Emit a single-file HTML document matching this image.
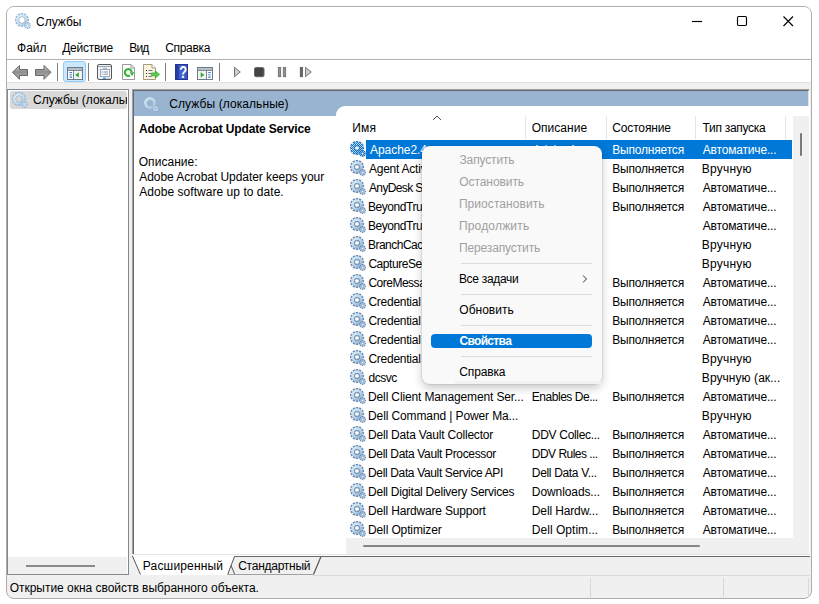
<!DOCTYPE html>
<html lang="ru"><head><meta charset="utf-8"><title>Службы</title>
<style>
html,body{margin:0;padding:0;background:#fff;}
body{width:819px;height:604px;position:relative;overflow:hidden;font-family:"Liberation Sans",sans-serif;font-size:12px;color:#000;}
.abs,.t{position:absolute;}
.t{white-space:nowrap;line-height:14px;height:14px;}
#win{position:absolute;left:6px;top:6px;width:804px;height:591px;border:1px solid #adadad;border-radius:8px;background:#f0f0f0;overflow:hidden;}
#cap{position:absolute;left:0;top:0;width:804px;height:76px;background:#fff;}
</style></head><body>
<svg width="0" height="0" style="position:absolute"><defs><symbol id="gear" viewBox="0 0 16 16">
<defs><linearGradient id="gearg" x1="0.15" y1="0.1" x2="0.85" y2="0.9"><stop offset="0" stop-color="#d6ebf7"/><stop offset="0.55" stop-color="#b7d2e8"/><stop offset="1" stop-color="#8eadcd"/></linearGradient></defs>
<path d="M12.28 5.88L14.10 5.80L14.10 8.20L12.28 8.12L12.14 8.67L13.75 9.51L12.55 11.59L11.01 10.61L10.61 11.01L11.59 12.55L9.51 13.75L8.67 12.14L8.12 12.28L8.20 14.10L5.80 14.10L5.88 12.28L5.33 12.14L4.49 13.75L2.41 12.55L3.39 11.01L2.99 10.61L1.45 11.59L0.25 9.51L1.86 8.67L1.72 8.12L-0.10 8.20L-0.10 5.80L1.72 5.88L1.86 5.33L0.25 4.49L1.45 2.41L2.99 3.39L3.39 2.99L2.41 1.45L4.49 0.25L5.33 1.86L5.88 1.72L5.80 -0.10L8.20 -0.10L8.12 1.72L8.67 1.86L9.51 0.25L11.59 1.45L10.61 2.99L11.01 3.39L12.55 2.41L13.75 4.49L12.14 5.33ZM4.90 7a2.1 2.1 0 1 0 4.2 0a2.1 2.1 0 1 0 -4.2 0Z" fill="#6c8cb4" fill-rule="evenodd"/>
<path d="M1.20 7a5.8 5.8 0 1 0 11.6 0a5.8 5.8 0 1 0 -11.6 0ZM4.90 7a2.1 2.1 0 1 0 4.2 0a2.1 2.1 0 1 0 -4.2 0Z" fill="url(#gearg)" fill-rule="evenodd"/>
<path d="M4.00 7a3.0 3.0 0 1 0 6.0 0a3.0 3.0 0 1 0 -6.0 0ZM4.90 7a2.1 2.1 0 1 0 4.2 0a2.1 2.1 0 1 0 -4.2 0Z" fill="#7590b2" fill-rule="evenodd"/>
<path d="M14.91 11.85L16.02 11.74L16.02 13.26L14.91 13.15L14.69 13.67L15.56 14.38L14.48 15.46L13.77 14.59L13.25 14.81L13.36 15.92L11.84 15.92L11.95 14.81L11.43 14.59L10.72 15.46L9.64 14.38L10.51 13.67L10.29 13.15L9.18 13.26L9.18 11.74L10.29 11.85L10.51 11.33L9.64 10.62L10.72 9.54L11.43 10.41L11.95 10.19L11.84 9.08L13.36 9.08L13.25 10.19L13.77 10.41L14.48 9.54L15.56 10.62L14.69 11.33ZM11.60 12.5a1.0 1.0 0 1 0 2.0 0a1.0 1.0 0 1 0 -2.0 0Z" fill="#6a8ab2" fill-rule="evenodd"/>
<path d="M10.10 12.5a2.5 2.5 0 1 0 5.0 0a2.5 2.5 0 1 0 -5.0 0ZM11.60 12.5a1.0 1.0 0 1 0 2.0 0a1.0 1.0 0 1 0 -2.0 0Z" fill="#a3bfda" fill-rule="evenodd"/>
</symbol><symbol id="gearL" viewBox="0 0 16 16">
<defs><linearGradient id="gearLg" x1="0.15" y1="0.1" x2="0.85" y2="0.9"><stop offset="0" stop-color="#dcf0fa"/><stop offset="0.55" stop-color="#c5e2f4"/><stop offset="1" stop-color="#a8c8e4"/></linearGradient></defs>
<path d="M12.28 5.88L14.10 5.80L14.10 8.20L12.28 8.12L12.14 8.67L13.75 9.51L12.55 11.59L11.01 10.61L10.61 11.01L11.59 12.55L9.51 13.75L8.67 12.14L8.12 12.28L8.20 14.10L5.80 14.10L5.88 12.28L5.33 12.14L4.49 13.75L2.41 12.55L3.39 11.01L2.99 10.61L1.45 11.59L0.25 9.51L1.86 8.67L1.72 8.12L-0.10 8.20L-0.10 5.80L1.72 5.88L1.86 5.33L0.25 4.49L1.45 2.41L2.99 3.39L3.39 2.99L2.41 1.45L4.49 0.25L5.33 1.86L5.88 1.72L5.80 -0.10L8.20 -0.10L8.12 1.72L8.67 1.86L9.51 0.25L11.59 1.45L10.61 2.99L11.01 3.39L12.55 2.41L13.75 4.49L12.14 5.33ZM4.10 7a2.9 2.9 0 1 0 5.8 0a2.9 2.9 0 1 0 -5.8 0Z" fill="#9ab7d6" fill-rule="evenodd"/>
<path d="M1.20 7a5.8 5.8 0 1 0 11.6 0a5.8 5.8 0 1 0 -11.6 0ZM4.10 7a2.9 2.9 0 1 0 5.8 0a2.9 2.9 0 1 0 -5.8 0Z" fill="url(#gearLg)" fill-rule="evenodd"/>
<path d="M3.50 7a3.5 3.5 0 1 0 7.0 0a3.5 3.5 0 1 0 -7.0 0ZM4.10 7a2.9 2.9 0 1 0 5.8 0a2.9 2.9 0 1 0 -5.8 0Z" fill="#a3adb8" fill-rule="evenodd"/>
<path d="M14.91 11.85L16.02 11.74L16.02 13.26L14.91 13.15L14.69 13.67L15.56 14.38L14.48 15.46L13.77 14.59L13.25 14.81L13.36 15.92L11.84 15.92L11.95 14.81L11.43 14.59L10.72 15.46L9.64 14.38L10.51 13.67L10.29 13.15L9.18 13.26L9.18 11.74L10.29 11.85L10.51 11.33L9.64 10.62L10.72 9.54L11.43 10.41L11.95 10.19L11.84 9.08L13.36 9.08L13.25 10.19L13.77 10.41L14.48 9.54L15.56 10.62L14.69 11.33ZM11.60 12.5a1.0 1.0 0 1 0 2.0 0a1.0 1.0 0 1 0 -2.0 0Z" fill="#8eaccd" fill-rule="evenodd"/>
<path d="M10.10 12.5a2.5 2.5 0 1 0 5.0 0a2.5 2.5 0 1 0 -5.0 0ZM11.60 12.5a1.0 1.0 0 1 0 2.0 0a1.0 1.0 0 1 0 -2.0 0Z" fill="#c4dcee" fill-rule="evenodd"/>
</symbol></defs></svg>
<div id="win"><div id="cap"></div></div>

<div class="abs" style="left:7px;top:59px;width:804px;height:1px;background:#b2b2b2"></div>
<div class="abs" style="left:7px;top:82px;width:804px;height:1px;background:#e2e2e2"></div>
<div class="abs" style="left:7px;top:83px;width:804px;height:7px;background:#f0f0f0"></div>
<svg class="abs" style="left:15px;top:13px" width="16" height="16"><use href="#gearL"/></svg>
<div class="t" id="title" style="left:35.99px;top:15px;letter-spacing:0.01px;">Службы</div>
<svg class="abs" style="left:680px;top:7px" width="130" height="30" viewBox="680 7 130 30" fill="none" stroke="#000" stroke-width="1.150">
<path d="M692 21.500h10"/>
<rect x="737.500" y="16.500" width="9" height="9" rx="1.200"/>
<path d="M783.500 16.500l9.500 9.500M793 16.500l-9.500 9.500"/>
</svg>
<div class="t" id="m1" style="left:17.11px;top:41px;letter-spacing:-0.06px;">Файл</div>
<div class="t" id="m2" style="left:62.21px;top:41px;letter-spacing:-0.262px;">Действие</div>
<div class="t" id="m3" style="left:129.32px;top:41px;letter-spacing:-0.86px;">Вид</div>
<div class="t" id="m4" style="left:165.19px;top:41px;letter-spacing:-0.317px;">Справка</div>
<svg class="abs" style="left:7px;top:60px" width="330" height="23" viewBox="7 60 330 23">
<defs>
<linearGradient id="ag" x1="0" y1="0" x2="0" y2="1"><stop offset="0" stop-color="#d6d6d6"/><stop offset="0.45" stop-color="#8e8e8e"/><stop offset="1" stop-color="#b4b4b4"/></linearGradient>
<linearGradient id="hg" x1="0" y1="0" x2="1" y2="0"><stop offset="0" stop-color="#23369a"/><stop offset="0.28" stop-color="#2a44ad"/><stop offset="0.3" stop-color="#3f62cf"/><stop offset="1" stop-color="#3456c4"/></linearGradient>
</defs>
<path d="M12.500 72.300L19.500 65.500V69.500H27.500V75.500H19.500V79.300Z" fill="url(#ag)" stroke="#666" stroke-width="1" stroke-linejoin="round"/>
<path d="M51 72.300L44 65.500V69.500H35.500V75.500H44V79.300Z" fill="url(#ag)" stroke="#666" stroke-width="1" stroke-linejoin="round"/>
<path d="M57.500 63v18M88.500 63v18M165.500 63v18M219.500 63v18" stroke="#7d7d7d" stroke-width="1"/>
<rect x="63.500" y="61.500" width="22" height="20" rx="2.500" fill="#cce8ff" stroke="#8ecbfa"/>
<!-- show/hide tree -->
<rect x="67.500" y="67.500" width="15" height="12" fill="#fff" stroke="#6f7a88"/>
<rect x="68" y="68" width="14" height="2" fill="#b6bfcc"/>
<path d="M68 70.500h14" stroke="#7f8a98"/>
<path d="M73.500 71v8" stroke="#7f8a98"/>
<path d="M69.500 72.500h2.500M69.500 74.800h2.500M69.500 77.100h2.500" stroke="#3b78c9" stroke-width="1.100"/>
<rect x="74" y="71" width="8" height="8" fill="#f3f3f3"/>
<path d="M78.800 72.200v5.400l-3.600-2.700z" fill="#2fa82f"/>
<!-- properties -->
<rect x="97.500" y="64.500" width="14" height="15" rx="1.500" fill="#eef1f7" stroke="#595959"/>
<path d="M98 66.500h13" stroke="#9aa3b3"/>
<rect x="100.500" y="69.500" width="9" height="7" fill="#f8f9fc" stroke="#a3abbd"/>
<path d="M100.500 69.500h3v-1.200h3v1.200" fill="none" stroke="#a3abbd"/>
<path d="M103.500 72h4.500M103.500 74.200h4.500" stroke="#8d94a3"/>
<path d="M101.700 72h1" stroke="#20a0ff"/><path d="M101.700 74.200h1" stroke="#8d94a3"/>
<rect x="103" y="77.500" width="3" height="1.500" fill="#25a5f5"/><rect x="107" y="77.500" width="2.500" height="1.500" fill="#c3c9d6"/>
<!-- refresh -->
<path d="M122.500 64.500h8.500l3.500 3.500v11.500h-12z" fill="#fff" stroke="#9a9a9a"/>
<path d="M131 64.500v3.500h3.500" fill="none" stroke="#9a9a9a"/>
<path d="M130 75.400A3.400 3.400 0 1 1 131.650 72" fill="none" stroke="#35b335" stroke-width="2.100"/>
<path d="M129.600 72.300h4.800l-2.300 3.600z" fill="#35b335"/>
<!-- export -->
<path d="M143.500 64.500h8.500l3.500 3.500v11.500h-12z" fill="#fbf4dc" stroke="#a49c80"/>
<path d="M152 64.500v3.500h3.500" fill="#fff" stroke="#a49c80"/>
<path d="M146 70.500h1M146 73.500h1M146 76.500h1" stroke="#333"/>
<path d="M148.500 70.500h4M148.500 73.500h3M148.500 76.500h3" stroke="#6a6fa0"/>
<path d="M151.500 73h4v-2l4 3.400-4 3.400v-2h-4z" fill="#5fcf4f" stroke="#36a336" stroke-width="0.800"/>
<!-- help -->
<rect x="175.500" y="64.500" width="12" height="15" fill="url(#hg)" stroke="#22349a"/>
<text x="183.200" y="77.600" text-anchor="middle" font-family="Liberation Sans, sans-serif" font-weight="bold" font-size="16.500" fill="#fff" transform="translate(183.200 0) scale(0.78 1) translate(-183.200 0)">?</text>
<!-- console tree -->
<rect x="197.500" y="67.500" width="15" height="12" fill="#fff" stroke="#6f7a88"/>
<rect x="198" y="68" width="14" height="2" fill="#b6bfcc"/>
<path d="M198 70.500h14" stroke="#7f8a98"/>
<path d="M206.500 71v8" stroke="#7f8a98"/>
<rect x="198" y="71" width="8" height="8" fill="#f3f3f3"/>
<path d="M208.200 72.500h2.500M208.200 74.800h2.500M208.200 77.100h2.500" stroke="#3b78c9" stroke-width="1.100"/>
<path d="M200.700 72.200v5.400l3.600-2.700z" fill="#2fa82f"/>
<!-- play/stop/pause/step -->
<path d="M234.500 67.300v9.400l5.800-4.700z" fill="#cdcdcd" stroke="#777" stroke-linejoin="round"/>
<rect x="254.500" y="67.500" width="9.500" height="9.200" rx="1.600" fill="#444" stroke="#666"/>
<rect x="278.300" y="67.500" width="2.400" height="9.200" fill="#909090" stroke="#6a6a6a" stroke-width="0.800"/>
<rect x="283.300" y="67.500" width="2.400" height="9.200" fill="#909090" stroke="#6a6a6a" stroke-width="0.800"/>
<rect x="300.300" y="67.500" width="2.200" height="9.200" fill="#666" stroke="#555" stroke-width="0.800"/>
<path d="M305.500 67.300v9.400l5.800-4.700z" fill="#cdcdcd" stroke="#777" stroke-linejoin="round"/>
</svg>
<div class="abs" style="left:7px;top:89px;width:122px;height:486px;background:#fff;border:1px solid #828790;box-sizing:border-box"></div>
<div class="abs" style="left:10px;top:91px;width:117px;height:18px;background:#d9d9d9;border-radius:2.500px"></div>
<svg class="abs" style="left:12px;top:92px" width="16" height="16"><use href="#gearL"/></svg>
<div class="abs" style="left:33px;top:92px;width:94px;height:17px;overflow:hidden"><div class="t" id="lp" style="left:0;top:1px">Службы (локальные)</div></div>
<div class="abs" style="left:8px;top:557px;width:119px;height:17px;background:#f0f0f0"></div>
<div class="abs" style="left:26px;top:565px;width:69px;height:1px;background:#8a8a8a;height:1.500px"></div>
<div class="abs" style="left:132px;top:89px;width:678px;height:465px;background:#fff;border-left:1px solid #a0a0a0;border-top:1px solid #a0a0a0;border-right:1px solid #fff;box-sizing:border-box"></div>
<div class="abs" style="left:133px;top:90px;width:676px;height:464px;background:#fff;border-left:1px solid #696969;border-top:1px solid #696969;border-right:1px solid #e3e3e3;box-sizing:border-box"></div>
<div class="abs" style="left:134px;top:91px;width:674px;height:25px;background:#99b4d1"></div>
<svg class="abs" style="left:143px;top:96px;opacity:.9" width="16" height="16"><use href="#gearL"/></svg>
<div class="t" id="hdr" style="left:169.29px;top:97px;letter-spacing:0.08px;">Службы (локальные)</div>
<div class="t" id="svc" style="left:139px;top:122px;font-weight:bold;letter-spacing:-0.149px;">Adobe Acrobat Update Service</div>
<div class="t" id="d0" style="left:138.73px;top:155px;letter-spacing:0.052px;">Описание:</div>
<div class="t" id="d1" style="left:139.28px;top:170px;letter-spacing:-0.062px;">Adobe Acrobat Updater keeps your</div>
<div class="t" id="d2" style="left:139.28px;top:185px;letter-spacing:0.04px;">Adobe software up to date.</div>
<div class="abs" style="left:336px;top:106px;width:473px;height:448px;background:#fff;border-top-left-radius:9px"></div>
<div class="abs" style="left:793px;top:116px;width:16px;height:438px;background:#f0f0f0"></div>
<div class="abs" style="left:800px;top:133px;width:2px;height:23px;background:#7a7a7a;border-radius:1px"></div>
<div class="abs" style="left:346px;top:538px;width:447px;height:16px;background:#f0f0f0"></div>
<div class="abs" style="left:363px;top:545px;width:337px;height:2px;background:#858585;border-radius:1px;height:1.500px"></div>
<div class="abs" style="left:525px;top:116px;width:1px;height:23px;background:#e5e5e5"></div>
<div class="abs" style="left:606px;top:116px;width:1px;height:23px;background:#e5e5e5"></div>
<div class="abs" style="left:695px;top:116px;width:1px;height:23px;background:#e5e5e5"></div>
<div class="abs" style="left:785px;top:116px;width:1px;height:23px;background:#e5e5e5"></div>
<svg class="abs" style="left:431.500px;top:115px" width="10" height="6" viewBox="0 0 10 6"><path d="M1 5l4-4 4 4" fill="none" stroke="#555" stroke-width="1"/></svg>
<div class="t" id="h1" style="left:352.32px;top:121px;letter-spacing:0.122px;">Имя</div>
<div class="t" id="h2" style="left:531.73px;top:121px;letter-spacing:0.027px;">Описание</div>
<div class="t" id="h3" style="left:612.19px;top:121px;letter-spacing:-0.134px;">Состояние</div>
<div class="t" id="h4" style="left:702.53px;top:121px;letter-spacing:-0.289px;">Тип запуска</div>
<div class="abs" style="left:366px;top:140px;width:426px;height:19px;background:#0078d7"></div>
<svg class="abs" style="left:350px;top:141px" width="16" height="16"><use href="#gear"/></svg>
<svg class="abs" style="left:350px;top:141px" width="16" height="16"><defs><pattern id="chk" width="2" height="2" patternUnits="userSpaceOnUse"><rect width="1" height="1" fill="#0078d7"/><rect x="1" y="1" width="1" height="1" fill="#0078d7"/></pattern><mask id="gm"><rect width="16" height="16" fill="#000"/><g filter="url(#wh)"><use href="#gear"/></g></mask><filter id="wh"><feColorMatrix type="matrix" values="0 0 0 0 1  0 0 0 0 1  0 0 0 0 1  0 0 0 1 0"/></filter></defs><rect width="16" height="16" fill="url(#chk)" mask="url(#gm)" shape-rendering="crispEdges"/></svg>
<div class="t" id="r0n" style="left:369.98px;top:143px;color:#fff;letter-spacing:-0.041px;">Apache2.4</div>
<div class="t" id="r0d" style="left:532.78px;top:143px;color:#fff;letter-spacing:-0.2px;">Adobe Acr...</div>
<div class="t" id="r0s" style="left:612.32px;top:143px;color:#fff;letter-spacing:-0.198px;">Выполняется</div>
<div class="t" id="r0t" style="left:702.78px;top:143px;color:#fff;letter-spacing:-0.182px;">Автоматиче...</div>
<svg class="abs" style="left:350px;top:160px" width="16" height="16"><use href="#gear"/></svg>
<div class="t" id="r1n" style="left:368.98px;top:162px;letter-spacing:-0.237px;">Agent Activation Runtime</div>
<div class="t" id="r1s" style="left:612.32px;top:162px;letter-spacing:-0.198px;">Выполняется</div>
<div class="t" id="r1t" style="left:701.82px;top:162px;letter-spacing:0.205px;">Вручную</div>
<svg class="abs" style="left:350px;top:179px" width="16" height="16"><use href="#gear"/></svg>
<div class="t" id="r2n" style="left:368.98px;top:181px;letter-spacing:-0.635px;">AnyDesk Service</div>
<div class="t" id="r2s" style="left:612.32px;top:181px;letter-spacing:-0.198px;">Выполняется</div>
<div class="t" id="r2t" style="left:702.78px;top:181px;letter-spacing:-0.182px;">Автоматиче...</div>
<svg class="abs" style="left:350px;top:198px" width="16" height="16"><use href="#gear"/></svg>
<div class="t" id="r3n" style="left:368.02px;top:200px;letter-spacing:-0.449px;">BeyondTrust</div>
<div class="t" id="r3s" style="left:612.32px;top:200px;letter-spacing:-0.198px;">Выполняется</div>
<div class="t" id="r3t" style="left:702.78px;top:200px;letter-spacing:-0.182px;">Автоматиче...</div>
<svg class="abs" style="left:350px;top:217px" width="16" height="16"><use href="#gear"/></svg>
<div class="t" id="r4n" style="left:368.02px;top:219px;letter-spacing:-0.449px;">BeyondTrust</div>
<div class="t" id="r4t" style="left:702.78px;top:219px;letter-spacing:-0.182px;">Автоматиче...</div>
<svg class="abs" style="left:350px;top:236px" width="16" height="16"><use href="#gear"/></svg>
<div class="t" id="r5n" style="left:368.02px;top:238px;letter-spacing:-0.525px;">BranchCache</div>
<div class="t" id="r5t" style="left:701.82px;top:238px;letter-spacing:0.205px;">Вручную</div>
<svg class="abs" style="left:350px;top:255px" width="16" height="16"><use href="#gear"/></svg>
<div class="t" id="r6n" style="left:368.39px;top:257px;letter-spacing:-0.448px;">CaptureService</div>
<div class="t" id="r6t" style="left:701.82px;top:257px;letter-spacing:0.205px;">Вручную</div>
<svg class="abs" style="left:350px;top:274px" width="16" height="16"><use href="#gear"/></svg>
<div class="t" id="r7n" style="left:368.39px;top:276px;letter-spacing:-0.491px;">CoreMessaging</div>
<div class="t" id="r7s" style="left:612.32px;top:276px;letter-spacing:-0.198px;">Выполняется</div>
<div class="t" id="r7t" style="left:702.78px;top:276px;letter-spacing:-0.182px;">Автоматиче...</div>
<svg class="abs" style="left:350px;top:293px" width="16" height="16"><use href="#gear"/></svg>
<div class="t" id="r8n" style="left:368.39px;top:295px;letter-spacing:-0.248px;">Credential</div>
<div class="t" id="r8s" style="left:612.32px;top:295px;letter-spacing:-0.198px;">Выполняется</div>
<div class="t" id="r8t" style="left:702.78px;top:295px;letter-spacing:-0.182px;">Автоматиче...</div>
<svg class="abs" style="left:350px;top:312px" width="16" height="16"><use href="#gear"/></svg>
<div class="t" id="r9n" style="left:368.39px;top:314px;letter-spacing:-0.248px;">Credential</div>
<div class="t" id="r9s" style="left:612.32px;top:314px;letter-spacing:-0.198px;">Выполняется</div>
<div class="t" id="r9t" style="left:702.78px;top:314px;letter-spacing:-0.182px;">Автоматиче...</div>
<svg class="abs" style="left:350px;top:331px" width="16" height="16"><use href="#gear"/></svg>
<div class="t" id="r10n" style="left:368.39px;top:333px;letter-spacing:-0.248px;">Credential</div>
<div class="t" id="r10s" style="left:612.32px;top:333px;letter-spacing:-0.198px;">Выполняется</div>
<div class="t" id="r10t" style="left:702.78px;top:333px;letter-spacing:-0.182px;">Автоматиче...</div>
<svg class="abs" style="left:350px;top:350px" width="16" height="16"><use href="#gear"/></svg>
<div class="t" id="r11n" style="left:368.39px;top:352px;letter-spacing:-0.248px;">Credential</div>
<div class="t" id="r11t" style="left:701.82px;top:352px;letter-spacing:0.205px;">Вручную</div>
<svg class="abs" style="left:350px;top:369px" width="16" height="16"><use href="#gear"/></svg>
<div class="t" id="r12n" style="left:368.5px;top:371px;letter-spacing:-0.451px;">dcsvc</div>
<div class="t" id="r12t" style="left:701.82px;top:371px;letter-spacing:0.063px;">Вручную (ак...</div>
<svg class="abs" style="left:350px;top:388px" width="16" height="16"><use href="#gear"/></svg>
<div class="t" id="r13n" style="left:368.02px;top:390px;letter-spacing:-0.132px;">Dell Client Management Ser...</div>
<div class="t" id="r13d" style="left:531.82px;top:390px;letter-spacing:-0.472px;">Enables De...</div>
<div class="t" id="r13s" style="left:612.32px;top:390px;letter-spacing:-0.198px;">Выполняется</div>
<div class="t" id="r13t" style="left:702.78px;top:390px;letter-spacing:-0.182px;">Автоматиче...</div>
<svg class="abs" style="left:350px;top:407px" width="16" height="16"><use href="#gear"/></svg>
<div class="t" id="r14n" style="left:368.02px;top:409px;letter-spacing:-0.111px;">Dell Command | Power Ma...</div>
<div class="t" id="r14t" style="left:701.82px;top:409px;letter-spacing:0.205px;">Вручную</div>
<svg class="abs" style="left:350px;top:426px" width="16" height="16"><use href="#gear"/></svg>
<div class="t" id="r15n" style="left:368.02px;top:428px;letter-spacing:-0.189px;">Dell Data Vault Collector</div>
<div class="t" id="r15d" style="left:531.82px;top:428px;letter-spacing:-0.303px;">DDV Collec...</div>
<div class="t" id="r15s" style="left:612.32px;top:428px;letter-spacing:-0.198px;">Выполняется</div>
<div class="t" id="r15t" style="left:702.78px;top:428px;letter-spacing:-0.182px;">Автоматиче...</div>
<svg class="abs" style="left:350px;top:445px" width="16" height="16"><use href="#gear"/></svg>
<div class="t" id="r16n" style="left:368.02px;top:447px;letter-spacing:-0.342px;">Dell Data Vault Processor</div>
<div class="t" id="r16d" style="left:531.82px;top:447px;letter-spacing:-0.525px;">DDV Rules ...</div>
<div class="t" id="r16s" style="left:612.32px;top:447px;letter-spacing:-0.198px;">Выполняется</div>
<div class="t" id="r16t" style="left:702.78px;top:447px;letter-spacing:-0.182px;">Автоматиче...</div>
<svg class="abs" style="left:350px;top:464px" width="16" height="16"><use href="#gear"/></svg>
<div class="t" id="r17n" style="left:368.02px;top:466px;letter-spacing:-0.353px;">Dell Data Vault Service API</div>
<div class="t" id="r17d" style="left:531.82px;top:466px;letter-spacing:-0.332px;">Dell Data V...</div>
<div class="t" id="r17s" style="left:612.32px;top:466px;letter-spacing:-0.198px;">Выполняется</div>
<div class="t" id="r17t" style="left:702.78px;top:466px;letter-spacing:-0.182px;">Автоматиче...</div>
<svg class="abs" style="left:350px;top:483px" width="16" height="16"><use href="#gear"/></svg>
<div class="t" id="r18n" style="left:368.02px;top:485px;letter-spacing:-0.238px;">Dell Digital Delivery Services</div>
<div class="t" id="r18d" style="left:531.82px;top:485px;letter-spacing:-0.09px;">Downloads...</div>
<div class="t" id="r18s" style="left:612.32px;top:485px;letter-spacing:-0.198px;">Выполняется</div>
<div class="t" id="r18t" style="left:702.78px;top:485px;letter-spacing:-0.182px;">Автоматиче...</div>
<svg class="abs" style="left:350px;top:502px" width="16" height="16"><use href="#gear"/></svg>
<div class="t" id="r19n" style="left:368.02px;top:504px;letter-spacing:-0.176px;">Dell Hardware Support</div>
<div class="t" id="r19d" style="left:531.82px;top:504px;letter-spacing:-0.129px;">Dell Hardw...</div>
<div class="t" id="r19s" style="left:612.32px;top:504px;letter-spacing:-0.198px;">Выполняется</div>
<div class="t" id="r19t" style="left:702.78px;top:504px;letter-spacing:-0.182px;">Автоматиче...</div>
<svg class="abs" style="left:350px;top:521px" width="16" height="16"><use href="#gear"/></svg>
<div class="t" id="r20n" style="left:368.02px;top:523px;letter-spacing:-0.124px;">Dell Optimizer</div>
<div class="t" id="r20d" style="left:531.82px;top:523px;letter-spacing:0.031px;">Dell Optim...</div>
<div class="t" id="r20s" style="left:612.32px;top:523px;letter-spacing:-0.198px;">Выполняется</div>
<div class="t" id="r20t" style="left:702.78px;top:523px;letter-spacing:-0.182px;">Автоматиче...</div>
<div class="abs" style="left:133px;top:554px;width:677px;height:1px;background:#e3e3e3"></div>
<div class="abs" style="left:133px;top:555px;width:677px;height:1px;background:#fff"></div>
<svg class="abs" style="left:130px;top:555px" width="220" height="22" viewBox="130 555 220 22">
<path d="M132 555.500l8.500 19.500h87l7.300-19.500z" fill="#fff"/>
<path d="M132.300 555.800l8.200 18.700" fill="none" stroke="#555" stroke-width="1"/>
<path d="M234.500 556.500l-6.800 18" fill="none" stroke="#555" stroke-width="1"/>
<path d="M321 556.500l-7.500 18" fill="none" stroke="#555" stroke-width="1.200"/>
<path d="M231 565.500l3.800 9" fill="none" stroke="#555" stroke-width="1"/>
<path d="M228 574.500h85.500" fill="none" stroke="#a0a0a0" stroke-width="1"/>
</svg>
<div class="abs" style="left:234px;top:556px;width:576px;height:1px;background:#696969"></div>
<div class="abs" style="left:313px;top:575px;width:497px;height:1px;background:#dadada"></div>
<div class="t" id="tab1" style="left:142.82px;top:559px;letter-spacing:0.168px;">Расширенный</div>
<div class="t" id="tab2" style="left:238.19px;top:559px;letter-spacing:-0.252px;">Стандартный</div>
<div class="t" id="status" style="left:9.73px;top:581px;letter-spacing:-0.029px;">Открытие окна свойств выбранного объекта.</div>
<div class="abs" style="left:590px;top:578px;width:1px;height:19px;background:#d7d7d7"></div>
<div class="abs" style="left:723px;top:578px;width:1px;height:19px;background:#d7d7d7"></div>
<div class="abs" style="left:808px;top:578px;width:1px;height:19px;background:#d7d7d7"></div>
<div class="abs" style="left:422px;top:146px;width:180px;height:238px;background:#f9f9f9;border-radius:8px;box-shadow:0 4px 10px rgba(0,0,0,.22),0 0 0 1px rgba(0,0,0,.06)"></div>
<div class="abs" style="left:455px;top:381px;width:147px;height:3px;background:#f1f1f1;border-bottom-right-radius:8px"></div>
<div class="abs" style="left:461px;top:263px;width:131px;height:1px;background:#dcdcdc"></div>
<div class="abs" style="left:461px;top:294px;width:131px;height:1px;background:#dcdcdc"></div>
<div class="abs" style="left:461px;top:325px;width:131px;height:1px;background:#dcdcdc"></div>
<div class="abs" style="left:461px;top:356px;width:131px;height:1px;background:#dcdcdc"></div>
<div class="abs" style="left:431px;top:334px;width:161px;height:14px;background:#0078d7;border-radius:4px"></div>
<div class="t" id="c1" style="left:459.51px;top:153px;color:#a0a0a0;letter-spacing:-0.148px;">Запустить</div>
<div class="t" id="c2" style="left:459.33px;top:175px;color:#a0a0a0;letter-spacing:-0.086px;">Остановить</div>
<div class="t" id="c3" style="left:458.93px;top:197px;color:#a0a0a0;letter-spacing:0.066px;">Приостановить</div>
<div class="t" id="c4" style="left:458.93px;top:219px;color:#a0a0a0;letter-spacing:0.182px;">Продолжить</div>
<div class="t" id="c5" style="left:458.93px;top:241px;color:#a0a0a0;letter-spacing:-0.125px;">Перезапустить</div>
<div class="t" id="c6" style="left:458.92px;top:272px;letter-spacing:-0.3px;">Все задачи</div>
<div class="t" id="c7" style="left:459.33px;top:303px;letter-spacing:0.004px;">Обновить</div>
<div class="t" id="c8" style="left:459.41px;top:334px;color:#fff;font-weight:bold;letter-spacing:-0.662px;">Свойства</div>
<div class="t" id="c9" style="left:459.29px;top:365px;letter-spacing:-0.15px;">Справка</div>
<svg class="abs" style="left:581px;top:274px" width="8" height="10" viewBox="0 0 8 10"><path d="M2 1.500l3.500 3.500-3.500 3.500" fill="none" stroke="#333" stroke-width="1"/></svg>
</body></html>
